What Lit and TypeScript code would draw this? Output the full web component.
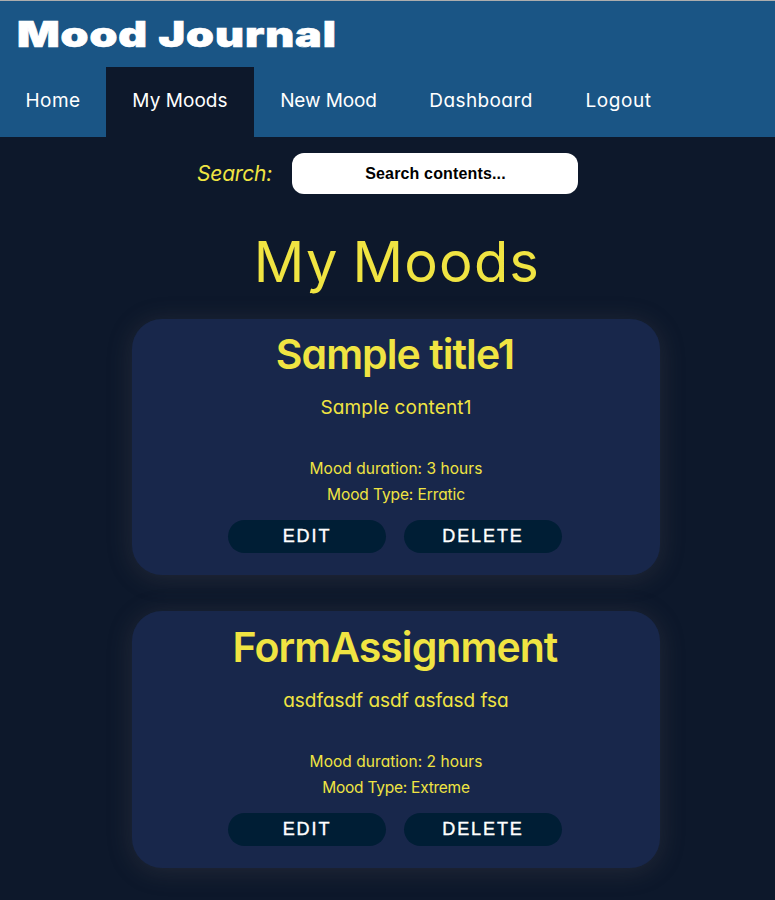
import { LitElement, html, css } from "lit";
import { customElement, property } from "lit/decorators.js";
import { styleMap } from "lit/directives/style-map.js";

type Label = { text: string; spacing: number };
type Mood = { title: Label; content: Label; duration: Label; kind: Label };

const NAV: Label[] = [
  { text: "Home", spacing: 0.4 },
  { text: "My Moods", spacing: 0.05 },
  { text: "New Mood", spacing: -0.1 },
  { text: "Dashboard", spacing: 0.4 },
  { text: "Logout", spacing: 0.6 },
];

const MOODS: Mood[] = [
  {
    title: { text: "Sample title1", spacing: -0.95 },
    content: { text: "Sample content1", spacing: 0.15 },
    duration: { text: "Mood duration: 3 hours", spacing: 0.05 },
    kind: { text: "Mood Type: Erratic", spacing: -0.1 },
  },
  {
    title: { text: "FormAssignment", spacing: -0.95 },
    content: { text: "asdfasdf asdf asfasd fsa", spacing: -0.03 },
    duration: { text: "Mood duration: 2 hours", spacing: 0.05 },
    kind: { text: "Mood Type: Extreme", spacing: -0.25 },
  },
];

const spaced = (l: Label) =>
  html`<span style=${styleMap({ letterSpacing: `${l.spacing}px` })}>${l.text}</span>`;

@customElement("mood-card")
class MoodCard extends LitElement {
  @property({ attribute: false }) mood!: Mood;

  static styles = css`
    :host {
      display: block;
      box-sizing: border-box;
      width: 528px;
      height: 256.4px;
      border-radius: 30px;
      background: #18274b;
      box-shadow: 0 3px 26px rgba(110, 95, 95, 0.24);
      color: #f0e442;
      text-align: center;
      white-space: nowrap;
    }
    .title {
      margin: 0;
      padding: 10.2px 2px 0 0;
      font-size: 41px;
      line-height: 50px;
      font-weight: 600;
    }
    .content {
      margin: 17px 0 0;
      font-size: 19px;
      line-height: 24px;
    }
    .meta {
      margin: 36px 0 0;
      font-size: 15.5px;
      line-height: 26px;
    }
    .meta + .meta {
      margin: 0;
    }
    .actions {
      display: flex;
      justify-content: center;
      gap: 18px;
      margin: 12px 2px 0 0;
    }
    .button {
      width: 158px;
      height: 33px;
      padding: 0;
      border: 0;
      border-radius: 16.5px;
      background: #001e35;
      color: #fff;
      font: 500 18px "Liberation Sans", Arial, sans-serif;
      letter-spacing: 1.9px;
      -webkit-text-stroke: 0.4px #fff;
    }
  `;

  render() {
    const m = this.mood;
    return html`
      <h2 class="title">${spaced(m.title)}</h2>
      <p class="content">${spaced(m.content)}</p>
      <p class="meta">${spaced(m.duration)}</p>
      <p class="meta">${spaced(m.kind)}</p>
      <div class="actions">
        <button class="button">EDIT</button>
        <button class="button">DELETE</button>
      </div>
    `;
  }
}

@customElement("app-root")
class AppRoot extends LitElement {
  static styles = css`
    :host {
      display: block;
      box-sizing: border-box;
      height: 900px;
      overflow: hidden;
      background: #0d182b;
      color: #fff;
      font-family: Inter, sans-serif;
      font-feature-settings: "cv11";
    }
    .header {
      box-sizing: border-box;
      height: 137px;
      border-top: 1px solid #adadad;
      background: #1a5585;
    }
    .brand {
      height: 66px;
      padding-left: 17px;
      font-size: 35px;
      line-height: 67px;
      font-weight: 900;
      font-feature-settings: normal;
    }
    .brand-name {
      display: inline-block;
      transform: scaleX(1.275);
      transform-origin: left;
      letter-spacing: 0.75px;
      word-spacing: 0.5px;
      -webkit-text-stroke: 0.7px #fff;
    }
    .nav {
      display: grid;
      grid-template-columns: 106px 148px 149px 156px 119px;
      height: 70px;
      font-size: 19px;
      line-height: 67px;
      text-align: center;
      white-space: nowrap;
    }
    .active {
      background: #0d182b;
    }
    .search {
      display: flex;
      align-items: center;
      gap: 19px;
      padding: 16px 0 0 197px;
      height: 41px;
    }
    .search-label {
      width: 76px;
      color: #f0e442;
      font-size: 21px;
      font-style: italic;
      line-height: 41px;
      letter-spacing: -0.2px;
    }
    .search-input {
      box-sizing: border-box;
      width: 286px;
      height: 41px;
      padding: 0 0 0 1px;
      border: 0;
      border-radius: 12px;
      background: #fff;
      font: bold 16px "Liberation Sans", Arial, sans-serif;
      letter-spacing: 0.15px;
      text-align: center;
    }
    .search-input::placeholder {
      color: #000;
      opacity: 1;
    }
    .content {
      display: flex;
      flex-direction: column;
      align-items: center;
      width: 792px;
    }
    .heading {
      margin: 34px 0 23px;
      padding-left: 2px;
      color: #f0e442;
      font-size: 56px;
      font-weight: 400;
      line-height: 68px;
      letter-spacing: 1.2px;
      word-spacing: -3px;
      white-space: nowrap;
    }
    .list {
      display: grid;
      gap: 36px;
    }
  `;

  render() {
    return html`
      <header class="header">
        <div class="brand"><span class="brand-name">Mood Journal</span></div>
        <nav class="nav">
          ${NAV.map((n, i) => html`<a class=${i === 1 ? "active" : "item"}>${spaced(n)}</a>`)}
        </nav>
      </header>
      <div class="search">
        <label class="search-label">Search:</label>
        <input class="search-input" placeholder="Search contents..." />
      </div>
      <main class="content">
        <h1 class="heading">My Moods</h1>
        <div class="list">
          ${MOODS.map((m) => html`<mood-card .mood=${m}></mood-card>`)}
        </div>
      </main>
    `;
  }
}
